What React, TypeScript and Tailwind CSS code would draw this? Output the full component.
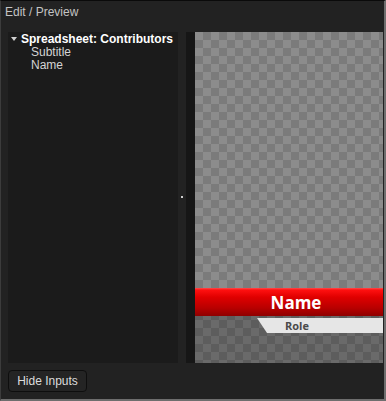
import React from "react";

export default function App() {
  return (
    <div className="w-[386px] h-[401px] flex flex-col bg-[#222222] border-t border-t-[#0a0a0a] border-l border-l-[#3c3c3c] border-r-2 border-r-[#6e6e6e] border-b-2 border-b-[#6e6e6e] overflow-hidden font-['Liberation_Sans',Arial,sans-serif]">
      <div className="h-[31px] shrink-0 pl-[4px] pt-[4px] text-[12px] leading-[14px] text-[#c4c4c4]">
        Edit / Preview
      </div>
      <div className="h-[331px] shrink-0 flex pl-[7px] pr-[1px]">
        <div className="w-[170px] bg-[#1b1b1b] pt-[0px]">
          <div className="flex items-center h-[14px] pl-[2px]">
            <svg width="6" height="4" viewBox="0 0 6 4" className="ml-[1px] mr-[4px]">
              <polygon points="0,0 6,0 3,4" fill="#d0d0d0" />
            </svg>
            <span className="text-[12px] leading-[14px] font-bold text-white">Spreadsheet: Contributors</span>
          </div>
          <div className="pl-[23px] text-[12px] leading-[13px] text-[#d4d4d4]">
            <div>Subtitle</div>
            <div>Name</div>
          </div>
        </div>
        <div className="w-[8px] flex items-center justify-center">
          <div className="w-[2px] h-[2px] bg-[#cfcfcf] mt-[-2px]" />
        </div>
        <div className="w-[9px] bg-[#161616]" />
        <div className="w-[188px] flex flex-col bg-[conic-gradient(#7b7b7b_25%,#8c8c8c_0_50%,#7b7b7b_0_75%,#8c8c8c_0)] bg-[length:16px_16px]">
          <div className="h-[256px] shrink-0" />
          <div className="flex-1 flex flex-col bg-[rgba(0,0,0,0.24)]">
            <div className="h-[28px] shrink-0 flex items-center justify-center pl-[14px] pt-[2px] bg-[linear-gradient(to_bottom,#ff4a4a_0px,#ff1010_2px,#e00000_9px,#b80000_20px,#8e0000_28px)]">
              <span className="font-['Open_Sans',sans-serif] font-bold text-[17px] leading-[20px] text-white">Name</span>
            </div>
            <div className="h-[15px] shrink-0 mt-[2px] ml-[62px] bg-[#e6e6e6] [clip-path:polygon(0_0,100%_0,100%_100%,10px_100%)] flex items-center pl-[28px]">
              <span className="font-['Open_Sans',sans-serif] font-bold text-[11px] leading-[13px] text-[#4a4a4a]">Role</span>
            </div>
          </div>
        </div>
      </div>
      <div className="flex-1 pl-[7px] pt-[7px]">
        <button className="w-[79px] h-[22px] rounded-[4px] border border-[#0e0e0e] bg-[#242424] text-[12px] leading-[14px] text-[#dcdcdc] flex items-center justify-center">
          Hide Inputs
        </button>
      </div>
    </div>
  );
}
